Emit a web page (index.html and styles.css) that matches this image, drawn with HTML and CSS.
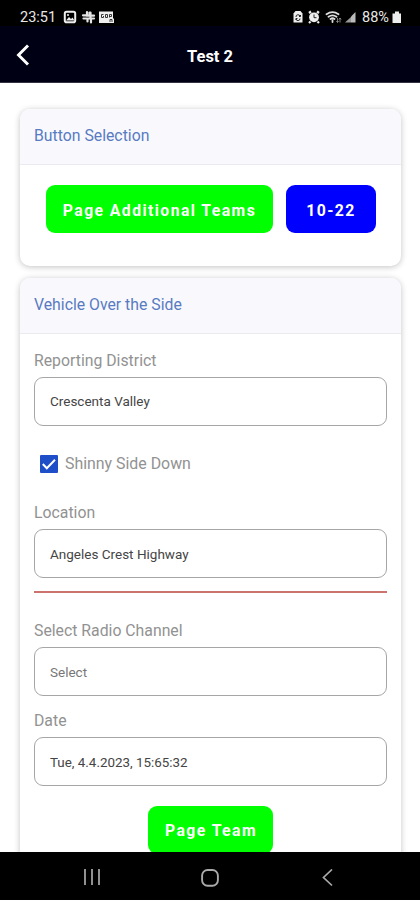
FILE: index.html
```
<!DOCTYPE html>
<html lang="en">
<head>
<meta charset="utf-8">
<title>Test 2</title>
<link rel="stylesheet" href="styles.css">
</head>
<body>
<div class="phone">
  <div class="status">
    <span class="clock">23:51</span>
    <svg class="status-left" width="54" height="14" viewBox="0 0 54 14">
      <rect x="1.800" y="1.800" width="10.400" height="10.400" rx="1.800" fill="none" stroke="#eee" stroke-width="2"/>
      <path d="M3 10.500l3-3.500 2 2 1.500-1.500 2 3z" fill="#eee"/><circle cx="5" cy="5" r="1" fill="#eee"/>
      <path d="M24 2v3.700h4M31 5.700h-4.500V2.500M31 8.500h-3v4M20 5.300h4.500M20.500 8.500h4v3M23.500 8.500h7.500M27.500 2.500v6.500" fill="none" stroke="#e4e4e4" stroke-width="2.200" stroke-linecap="round"/>
      <path d="M36 1.500h14v7h1v4.500h-15z" fill="#eee"/>
      <path d="M40.500 4.500h-2v3h2v-1.500M42.500 4.500h2v3h-2zM46.500 7.500v-3h2v2h-2M47 12v-2.500h2V12" fill="none" stroke="#222" stroke-width=".9"/>
    </svg>
    <svg class="status-right" width="66" height="14" viewBox="0 0 66 14">
      <path d="M1.500 12.500v-9l2-2.500h5l2 2.500v9z" fill="#eee"/>
      <path d="M4 7a2 2 0 0 1 4-.5M8 8.500a2 2 0 0 1-4 .2M7 6.500h1.500V5M4 10V8.500h1.500" fill="none" stroke="#222"/>
      <circle cx="22" cy="7.300" r="4.900" fill="#eee"/>
      <path d="M17 3l2-1.500M27 3l-2-1.500M18.500 11.500L17 13M25.500 11.500L27 13" stroke="#eee" stroke-width="2.200"/>
      <path d="M22 4.500v3.200h2.500" fill="none" stroke="#222"/>
      <path d="M34.500 4.300q6-4.300 12 0M36.500 6.800q4-3 8 0M38.500 9q2-1.500 4 0M40.500 10.500v1.500" fill="none" stroke="#ddd" stroke-width="1.800" stroke-linecap="round"/>
      <path d="M45.500 8v4.500M44.300 11l1.200 1.500L46.700 11M48 12.500V8M46.800 9.500L48 8l1.200 1.500" fill="none" stroke="#999" stroke-width=".8"/>
      <path d="M53 12.500L59 7v5.500z" fill="#999"/><path d="M59 12.500V6.500L63.500 2v10.500z" fill="#bbb"/>
    </svg>
    <span class="percent">88%</span>
    <svg width="10" height="14" viewBox="0 0 10 14"><path d="M.5 3.500h2.500v-2h4v2h2v9.500h-8.500z" fill="#eee"/></svg>
  </div>
  <header class="header">
    <svg class="back" width="14" height="22" viewBox="0 0 14 22"><path d="M12 1.500L2.500 11l9.500 9.500" fill="none" stroke="#fff" stroke-width="2.900"/></svg>
    <h1>Test 2</h1>
  </header>
  <main class="content">
    <section class="card">
      <h2>Button Selection</h2>
      <div class="buttons">
        <button class="btn wide">Page Additional Teams</button>
        <button class="btn blue">10-22</button>
      </div>
    </section>
    <section class="card">
      <h2>Vehicle Over the Side</h2>
      <div class="form">
        <label class="roomy">Reporting District</label>
        <div class="field first">Crescenta Valley</div>
        <div class="check">
          <svg width="18" height="18" viewBox="0 0 18 18"><rect width="18" height="18" rx="1" fill="#1f4fc8"/><path d="M2.800 9l4 4.200 8.200-8.400" fill="none" stroke="#fff" stroke-width="2"/></svg>
          <span>Shinny Side Down</span>
        </div>
        <label>Location</label>
        <div class="field">Angeles Crest Highway</div>
        <hr>
        <label>Select Radio Channel</label>
        <div class="field placeholder">Select</div>
        <label class="date-label">Date</label>
        <div class="field date">Tue, 4.4.2023, 15:65:32</div>
        <button class="btn team">Page Team</button>
      </div>
    </section>
  </main>
  <nav class="nav">
    <svg width="18" height="18" viewBox="0 0 18 18"><path d="M2 0v16M9 0v16M16 0v16" stroke="#aaa" stroke-width="1.700"/></svg>
    <svg width="18" height="18" viewBox="0 0 18 18"><rect x="1.100" y="1" width="15.800" height="15.800" rx="5.500" fill="none" stroke="#aaa" stroke-width="1.900"/></svg>
    <svg width="18" height="18" viewBox="0 0 18 18"><path d="M13 .5L4.500 8.500l8.500 8" fill="none" stroke="#aaa" stroke-width="1.700"/></svg>
  </nav>
</div>
</body>
</html>
```
FILE: styles.css
```
* { box-sizing: border-box; }
body { margin: 0; background: #fff; font-family: Roboto, sans-serif; }
.phone { width: 420px; height: 900px; display: flex; flex-direction: column; overflow: hidden; }
.status { height: 26px; flex: none; background: #000; color: #e8e8e8; display: flex; align-items: center; padding: 8px 18px 0 20px; font-size: 14.5px; line-height: 18px; }
.clock { width: 43px; padding-top: 1px; }
.status-right { margin-left: auto; }
.percent { width: 30px; margin-left: 4px; padding-top: 1px; }
.header { height: 57px; flex: none; background: #000014; display: grid; grid-template-columns: 60px 1fr 60px; align-items: center; border-bottom: 1px solid #333340; }
.back { margin-left: 16px; margin-top: 1px; }
h1 { margin: 5px 0 0; color: #fff; text-align: center; font-size: 16.5px; line-height: 20px; font-weight: 700; }
.content { flex: 1; min-height: 0; overflow: hidden; padding: 26px 19px 0 20px; display: flex; flex-direction: column; gap: 12px; }
.card { flex: none; border-radius: 10px; background: #fff; overflow: hidden; box-shadow: 0 1px 6px rgba(0,0,0,.24); }
.card:first-child { height: 157px; }
h2 { margin: 0; height: 56px; padding: 17px 14px; background: #f9f9fd; border-bottom: 1px solid #ebebef; color: #587bc2; font-size: 15.8px; line-height: 20px; font-weight: 400; }
.buttons { display: flex; justify-content: center; gap: 13px; padding-top: 20px; }
.btn { font-family: inherit; height: 48px; border: 0; border-radius: 9px; padding: 3px 0 0 1px; background: #00ff00; color: #fff; font-size: 15.8px; font-weight: 700; letter-spacing: 1.4px; text-align: center; white-space: nowrap; }
.wide { width: 227px; }
.blue { width: 90px; background: #0000ff; }
.form { display: flex; flex-direction: column; padding: 17px 14px 0; height: 540px; }
label { display: block; font-size: 15.8px; line-height: 20px; color: #929292; margin-bottom: 6px; }
label.roomy { margin-bottom: 6px; }
.field { height: 49px; flex: none; border: 1px solid #a6a6a6; border-radius: 9px; padding: 0 15px; line-height: 48px; font-size: 13.5px; color: #454545; }
.field.first { line-height: 46px; }
.date { font-size: 13.4px; line-height: 49px; }
.placeholder { color: #777; }
.check { display: flex; align-items: center; gap: 7px; padding: 28px 0 29px 6px; height: 77px; font-size: 15.9px; line-height: 20px; color: #929292; }
.check svg { margin-top: -1px; }
hr { width: 100%; height: 2px; flex: none; background: #cb746e; border: 0; margin: 13px 0 28px; }
.date-label { margin-top: 15px; }
.team { width: 125px; align-self: center; flex: none; margin-top: 20px; padding-top: 1px; }
.nav { height: 48px; flex: none; background: #000; display: flex; justify-content: space-between; align-items: center; padding: 3px 83px 0; }
```
